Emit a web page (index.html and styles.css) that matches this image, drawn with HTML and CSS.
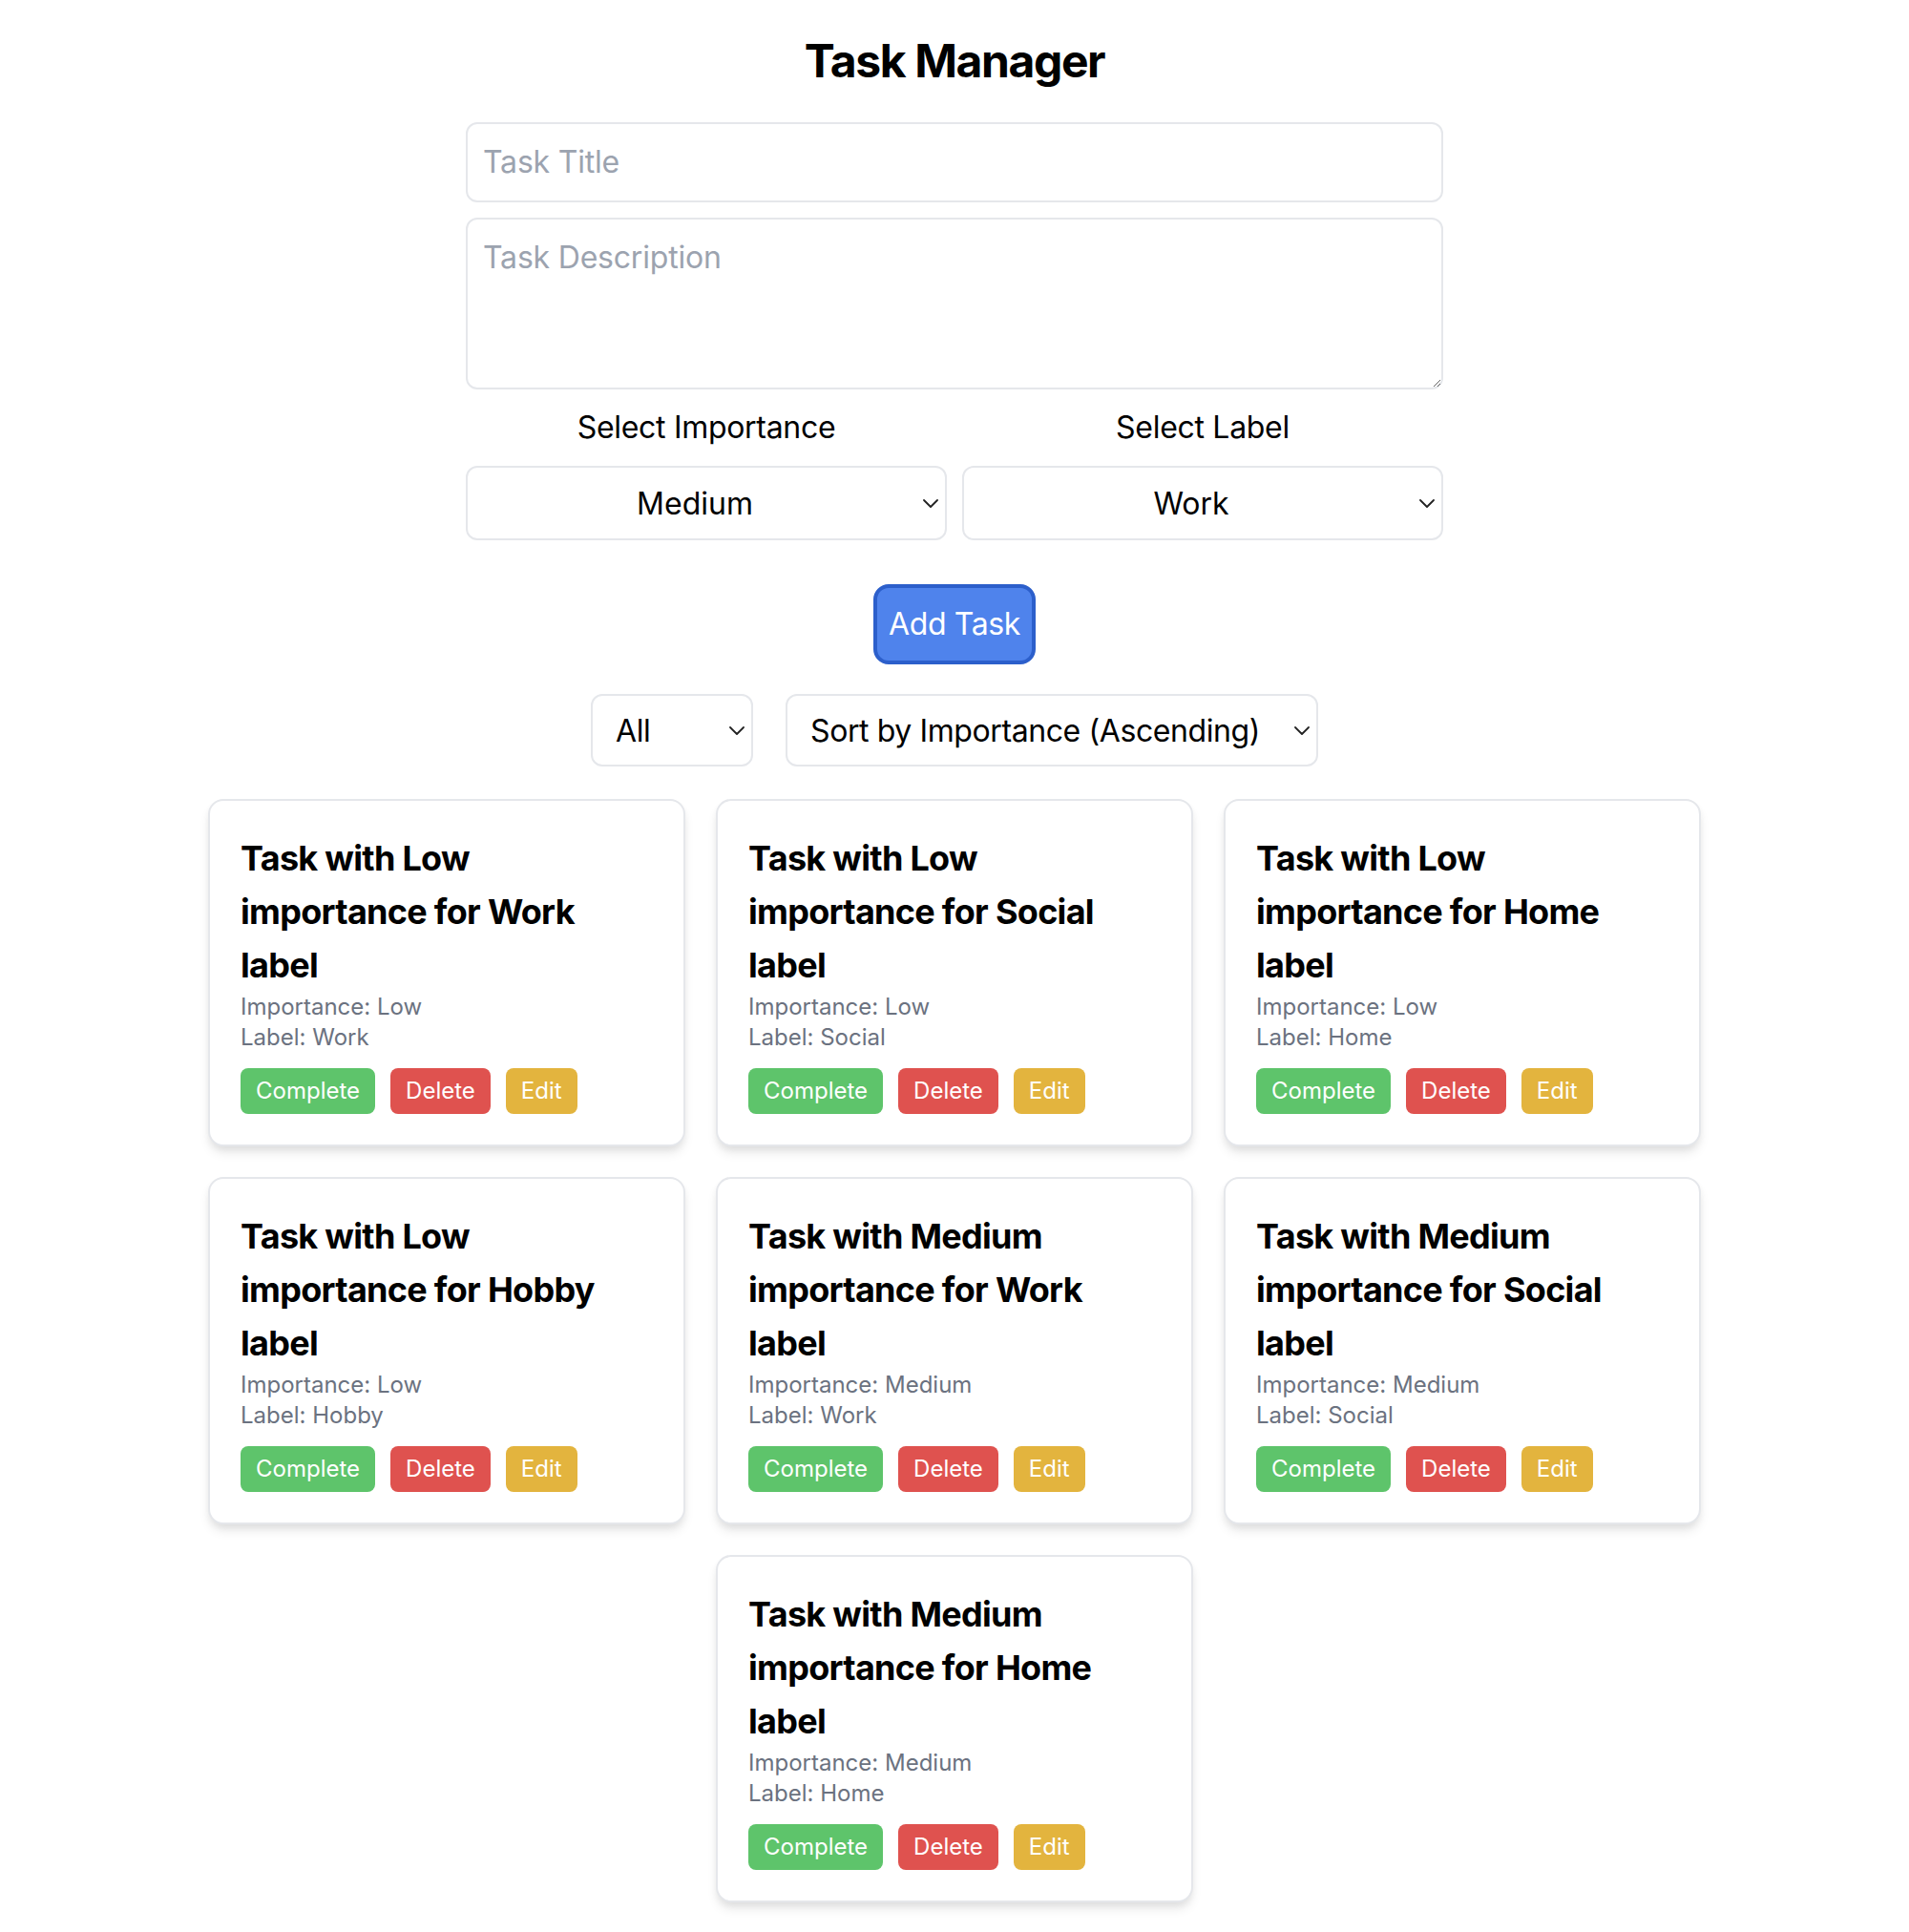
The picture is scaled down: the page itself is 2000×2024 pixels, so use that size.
FILE: index.html
```html
<!DOCTYPE html>
<html lang="en">
<head>
<meta charset="utf-8">
<title>Task Manager</title>
<link rel="stylesheet" href="styles.css">
</head>
<body>
<div class="app">
  <h1 class="app-title">Task Manager</h1>
  <div class="form">
    <input class="field" type="text" placeholder="Task Title">
    <textarea class="field area" placeholder="Task Description"></textarea>
    <div class="pickers">
      <div class="picker">
        <label class="picker-label">Select Importance</label>
        <div class="select-wrap">
          <select class="select centered">
            <option>Low</option>
            <option selected>Medium</option>
            <option>High</option>
          </select>
          <svg class="chev" viewBox="0 0 16 9" width="16" height="9"><path d="M1 1l7 7 7-7" fill="none" stroke="#222" stroke-width="1.8" stroke-linecap="round" stroke-linejoin="round"/></svg>
        </div>
      </div>
      <div class="picker">
        <label class="picker-label">Select Label</label>
        <div class="select-wrap">
          <select class="select centered">
            <option selected>Work</option>
            <option>Social</option>
            <option>Home</option>
            <option>Hobby</option>
          </select>
          <svg class="chev" viewBox="0 0 16 9" width="16" height="9"><path d="M1 1l7 7 7-7" fill="none" stroke="#222" stroke-width="1.8" stroke-linecap="round" stroke-linejoin="round"/></svg>
        </div>
      </div>
    </div>
    <div class="add-row">
      <button class="add-btn">Add Task</button>
    </div>
  </div>

  <div class="filters">
    <div class="select-wrap filter-all">
      <select class="select left">
        <option selected>All</option>
        <option>Work</option>
      </select>
      <svg class="chev" viewBox="0 0 16 9" width="16" height="9"><path d="M1 1l7 7 7-7" fill="none" stroke="#222" stroke-width="1.8" stroke-linecap="round" stroke-linejoin="round"/></svg>
    </div>
    <div class="select-wrap filter-sort">
      <select class="select left">
        <option selected>Sort by Importance (Ascending)</option>
        <option>Sort by Importance (Descending)</option>
      </select>
      <svg class="chev" viewBox="0 0 16 9" width="16" height="9"><path d="M1 1l7 7 7-7" fill="none" stroke="#222" stroke-width="1.8" stroke-linecap="round" stroke-linejoin="round"/></svg>
    </div>
  </div>

  <div class="cards">
    <div class="card">
      <h3 class="card-title">Task with Low importance for Work label</h3>
      <p class="meta">Importance: Low</p>
      <p class="meta">Label: Work</p>
      <div class="actions"><button class="btn green">Complete</button><button class="btn red">Delete</button><button class="btn yellow">Edit</button></div>
    </div>
    <div class="card">
      <h3 class="card-title">Task with Low importance for Social label</h3>
      <p class="meta">Importance: Low</p>
      <p class="meta">Label: Social</p>
      <div class="actions"><button class="btn green">Complete</button><button class="btn red">Delete</button><button class="btn yellow">Edit</button></div>
    </div>
    <div class="card">
      <h3 class="card-title">Task with Low importance for Home label</h3>
      <p class="meta">Importance: Low</p>
      <p class="meta">Label: Home</p>
      <div class="actions"><button class="btn green">Complete</button><button class="btn red">Delete</button><button class="btn yellow">Edit</button></div>
    </div>
    <div class="card">
      <h3 class="card-title">Task with Low importance for Hobby label</h3>
      <p class="meta">Importance: Low</p>
      <p class="meta">Label: Hobby</p>
      <div class="actions"><button class="btn green">Complete</button><button class="btn red">Delete</button><button class="btn yellow">Edit</button></div>
    </div>
    <div class="card">
      <h3 class="card-title">Task with Medium importance for Work label</h3>
      <p class="meta">Importance: Medium</p>
      <p class="meta">Label: Work</p>
      <div class="actions"><button class="btn green">Complete</button><button class="btn red">Delete</button><button class="btn yellow">Edit</button></div>
    </div>
    <div class="card">
      <h3 class="card-title">Task with Medium importance for Social label</h3>
      <p class="meta">Importance: Medium</p>
      <p class="meta">Label: Social</p>
      <div class="actions"><button class="btn green">Complete</button><button class="btn red">Delete</button><button class="btn yellow">Edit</button></div>
    </div>
    <div class="card">
      <h3 class="card-title">Task with Medium importance for Home label</h3>
      <p class="meta">Importance: Medium</p>
      <p class="meta">Label: Home</p>
      <div class="actions"><button class="btn green">Complete</button><button class="btn red">Delete</button><button class="btn yellow">Edit</button></div>
    </div>
  </div>
</div>
</body>
</html>
```
FILE: styles.css
```css
* { box-sizing: border-box; }

html, body {
  margin: 0;
  padding: 0;
  background: #ffffff;
}

body {
  font-family: Inter, "Noto Sans", "Liberation Sans", sans-serif;
  color: #000;
}

.app {
  padding-top: 32px;
}

.app-title {
  margin: 0 0 32px;
  text-align: center;
  font-size: 48px;
  line-height: 64px;
  font-weight: 700;
  letter-spacing: -1.4px;
}

.form {
  width: 1024px;
  margin: 0 auto;
}

.field {
  display: block;
  width: 100%;
  border: 2px solid #e5e7eb;
  border-radius: 12px;
  padding: 16px;
  font-family: inherit;
  font-size: 32px;
  line-height: 48px;
  letter-spacing: -0.2px;
  color: #111;
  background: #fff;
  margin: 0 0 16px;
  outline: none;
}

.field::placeholder {
  color: #9ca3af;
}

.area {
  height: 180px;
  resize: vertical;
}

.pickers {
  display: grid;
  grid-template-columns: 1fr 1fr;
  column-gap: 16px;
}

.picker {
  display: flex;
  flex-direction: column;
}

.picker-label {
  display: block;
  text-align: center;
  font-size: 32px;
  line-height: 48px;
  letter-spacing: -0.3px;
  margin-bottom: 16px;
}

.select-wrap {
  position: relative;
}

.select {
  -webkit-appearance: none;
  appearance: none;
  display: block;
  width: 100%;
  height: 78px;
  border: 2px solid #e5e7eb;
  border-radius: 12px;
  background: #fff;
  font-family: inherit;
  font-size: 32px;
  color: #000;
  outline: none;
}

.select.centered {
  padding: 0 32px 0 8px;
  text-align: center;
  text-align-last: center;
}

.select.left {
  padding: 0 40px 0 24px;
  height: 76px;
  letter-spacing: -0.4px;
}

.chev {
  position: absolute;
  right: 9px;
  top: 50%;
  margin-top: -4px;
  pointer-events: none;
}

.add-row {
  display: flex;
  justify-content: center;
  margin-top: 46px;
}

.add-btn {
  background: #4f83ec;
  border: 4px solid #2c5fcb;
  border-radius: 16px;
  color: #fff;
  font-family: inherit;
  font-size: 32px;
  line-height: 48px;
  letter-spacing: -0.4px;
  white-space: nowrap;
  padding: 14px 12px;
  height: 84px;
}

.filters {
  display: flex;
  justify-content: center;
  gap: 34px;
  margin-top: 31px;
  margin-bottom: 18px;
}

.filter-all {
  width: 170px;
}

.filter-sort {
  width: 558px;
}

.cards {
  display: flex;
  flex-wrap: wrap;
  justify-content: center;
}

.card {
  width: 500px;
  margin: 16px;
  background: #fff;
  border: 2px solid #e5e7eb;
  border-radius: 16px;
  padding: 32px;
  box-shadow: 0 8px 12px -2px rgba(0, 0, 0, 0.1), 0 4px 8px -2px rgba(0, 0, 0, 0.06);
}

.card-title {
  margin: 0;
  font-size: 36px;
  line-height: 56px;
  font-weight: 700;
  letter-spacing: -0.7px;
}

.meta {
  margin: 0;
  font-size: 24px;
  line-height: 32px;
  color: #6b7280;
}

.actions {
  display: flex;
  gap: 16px;
  margin-top: 16px;
}

.btn {
  border: none;
  border-radius: 8px;
  color: #fff;
  font-family: inherit;
  font-size: 24px;
  line-height: 32px;
  padding: 8px 16px;
}

.green { background: #5ec46b; }
.red { background: #df524f; }
.yellow { background: #e3b43e; }
```
